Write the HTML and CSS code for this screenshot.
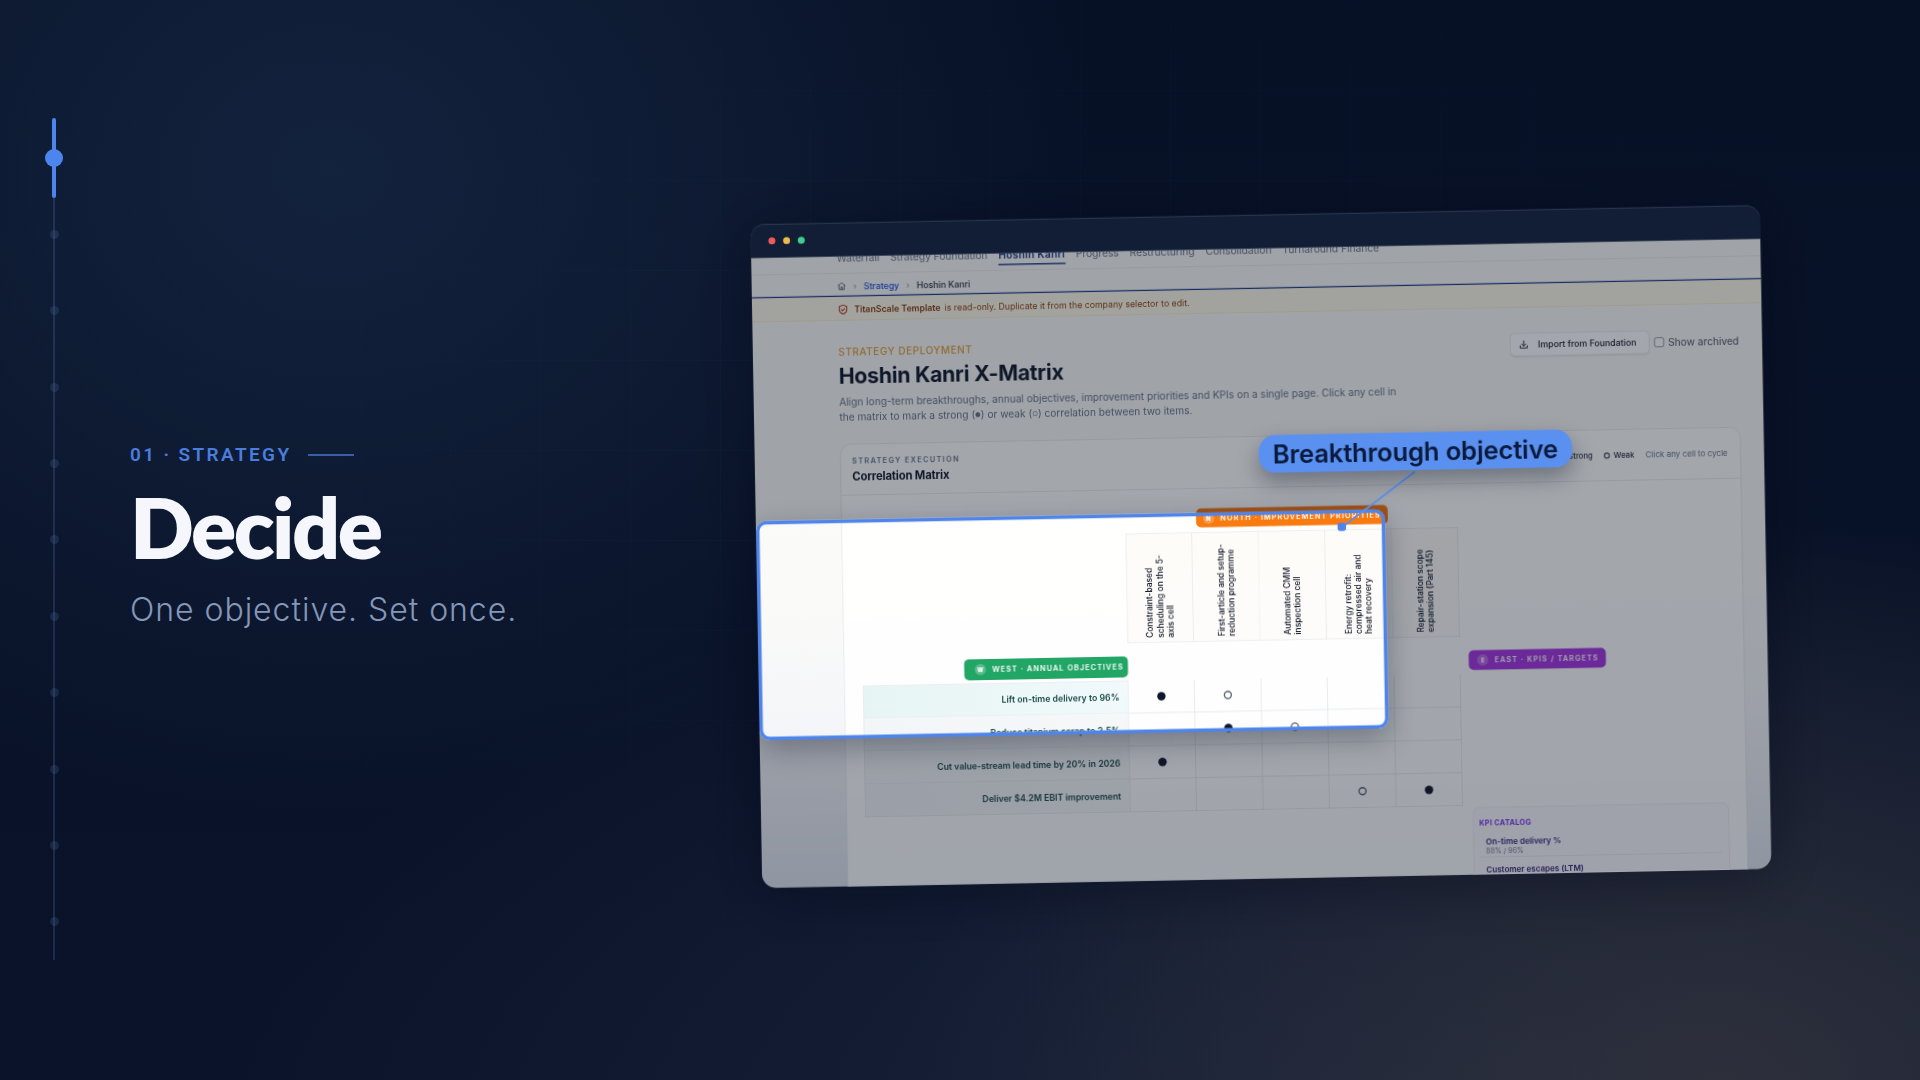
FILE: index.html
```html
<!DOCTYPE html>
<html lang="en">
<head>
<meta charset="utf-8">
<title>Decide</title>
<link rel="stylesheet" href="styles.css">
</head>
<body>
<div class="grid-bg"></div>
<main class="hero">
  <nav class="rail">
    <div class="rail-item active"><span class="rail-dot"></span></div>
    <div class="rail-item"><span class="rail-dot"></span></div>
    <div class="rail-item"><span class="rail-dot"></span></div>
    <div class="rail-item"><span class="rail-dot"></span></div>
    <div class="rail-item"><span class="rail-dot"></span></div>
    <div class="rail-item"><span class="rail-dot"></span></div>
    <div class="rail-item"><span class="rail-dot"></span></div>
    <div class="rail-item"><span class="rail-dot"></span></div>
    <div class="rail-item"><span class="rail-dot"></span></div>
    <div class="rail-item"><span class="rail-dot"></span></div>
    <div class="rail-item"><span class="rail-dot"></span></div>
  </nav>
  <section class="copy">
    <div class="eyebrow"><span>01 · STRATEGY</span><i class="eyebrow-line"></i></div>
    <h1 class="title">Decide</h1>
    <p class="sub">One objective. Set once.</p>
  </section>
</main>

<div class="window">
  <header class="titlebar">
    <span class="light red"></span><span class="light yellow"></span><span class="light green"></span>
  </header>
  <div class="viewport">
    <div class="tabs">
      <span class="tab">Waterfall</span>
      <span class="tab">Strategy Foundation</span>
      <span class="tab current">Hoshin Kanri</span>
      <span class="tab">Progress</span>
      <span class="tab">Restructuring</span>
      <span class="tab">Consolidation</span>
      <span class="tab">Turnaround Finance</span>
    </div>
    <div class="crumbs">
      <svg class="crumb-home" viewBox="0 0 24 24" fill="none" stroke="currentColor" stroke-width="2" stroke-linecap="round" stroke-linejoin="round"><path d="M3 10.500 12 3l9 7.500"/><path d="M5 9v12h14V9"/><path d="M10 21v-7h4v7"/></svg>
      <span class="crumb-sep">›</span>
      <span class="crumb-link">Strategy</span>
      <span class="crumb-sep">›</span>
      <span class="crumb-now">Hoshin Kanri</span>
    </div>
    <div class="banner">
      <svg class="banner-icon" viewBox="0 0 24 24" fill="none" stroke="currentColor" stroke-width="2.200" stroke-linecap="round" stroke-linejoin="round"><path d="M12 2.500 20 5.500v6.500c0 5-3.400 8.200-8 9.500-4.600-1.300-8-4.500-8-9.500V5.500z"/><path d="m8.500 12 2.500 2.500 4.500-4.500"/></svg>
      <strong>TitanScale Template</strong>
      <span>is read-only. Duplicate it from the company selector to edit.</span>
    </div>
    <div class="page">
      <div class="page-head">
        <div class="page-intro">
          <div class="kicker">STRATEGY DEPLOYMENT</div>
          <h2 class="page-title">Hoshin Kanri X-Matrix</h2>
          <p class="page-desc">Align long-term breakthroughs, annual objectives, improvement priorities and KPIs on a single page. Click any cell in the matrix to mark a strong (<span class="glyph">●</span>) or weak (<span class="glyph">○</span>) correlation between two items.</p>
        </div>
        <div class="page-actions">
          <button class="btn">
            <svg viewBox="0 0 24 24" fill="none" stroke="currentColor" stroke-width="2" stroke-linecap="round" stroke-linejoin="round"><path d="M12 4v11"/><path d="m7.500 11 4.500 4.500 4.500-4.500"/><path d="M4 15v5h16v-5"/></svg>
            Import from Foundation
          </button>
          <label class="check"><i class="check-box"></i>Show archived</label>
        </div>
      </div>

      <section class="card">
        <div class="card-head">
          <div>
            <div class="card-label">STRATEGY EXECUTION</div>
            <div class="card-title">Correlation Matrix</div>
          </div>
          <div class="legend">
            <span class="legend-item"><i class="mark strong small"></i>Strong</span>
            <span class="legend-item"><i class="mark weak small"></i>Weak</span>
            <span class="legend-hint">Click any cell to cycle</span>
          </div>
        </div>
        <div class="matrix">
          <div class="chip chip-north"><b>N</b>NORTH · IMPROVEMENT PRIORITIES</div>

          <div class="corner"></div>
          <div class="col-head first"><span>Constraint-based<br>scheduling on the 5-<br>axis cell</span></div>
          <div class="col-head"><span>First-article and setup-<br>reduction programme</span></div>
          <div class="col-head"><span>Automated CMM<br>inspection cell</span></div>
          <div class="col-head"><span>Energy retrofit:<br>compressed air and<br>heat recovery</span></div>
          <div class="col-head"><span>Repair-station scope<br>expansion (Part 145)</span></div>

          <div class="chip chip-west"><b>W</b>WEST · ANNUAL OBJECTIVES</div>
          <div class="chip chip-east"><b>E</b>EAST · KPIS / TARGETS</div>

          <div class="row lead">
            <div class="row-label">Lift on-time delivery to 96%</div>
            <div class="cell"><i class="mark strong"></i></div>
            <div class="cell"><i class="mark weak"></i></div>
            <div class="cell"></div>
            <div class="cell"></div>
            <div class="cell"></div>
          </div>
          <div class="row">
            <div class="row-label">Reduce titanium scrap to 2.5%</div>
            <div class="cell"></div>
            <div class="cell"><i class="mark strong"></i></div>
            <div class="cell"><i class="mark weak"></i></div>
            <div class="cell"></div>
            <div class="cell"></div>
          </div>
          <div class="row">
            <div class="row-label">Cut value-stream lead time by 20% in 2026</div>
            <div class="cell"><i class="mark strong"></i></div>
            <div class="cell"></div>
            <div class="cell"></div>
            <div class="cell"></div>
            <div class="cell"></div>
          </div>
          <div class="row">
            <div class="row-label">Deliver $4.2M EBIT improvement</div>
            <div class="cell"></div>
            <div class="cell"></div>
            <div class="cell"></div>
            <div class="cell"><i class="mark weak"></i></div>
            <div class="cell"><i class="mark strong"></i></div>
          </div>

          <aside class="kpis">
            <div class="kpis-label">KPI CATALOG</div>
            <div class="kpi"><div class="kpi-name">On-time delivery %</div><div class="kpi-val">88% / 96%</div></div>
            <div class="kpi"><div class="kpi-name">Customer escapes (LTM)</div><div class="kpi-val">14 / 4</div></div>
          </aside>
        </div>
      </section>
    </div>
    <div class="spotlight"></div>
  </div>
  <svg class="connector" viewBox="0 0 130 90"><path class="connector-line" d="M116 4 10 82"/><rect class="connector-dot" x="4" y="75" width="12" height="12" rx="4"/></svg>
  <div class="callout">Breakthrough objective</div>
</div>
</body>
</html>
```
FILE: styles.css
```css
* { box-sizing: border-box; }
html, body { margin: 0; height: 100%; }
body {
  width: 1920px;
  height: 1080px;
  overflow: hidden;
  position: relative;
  font-family: "Inter", "Liberation Sans", sans-serif;
  background:
    radial-gradient(820px 560px at 1720px 1080px, rgba(58,56,60,.62), rgba(58,56,60,0) 100%),
    radial-gradient(1300px 620px at 1500px 1130px, rgba(38,48,74,.62), rgba(38,48,74,0) 100%),
    radial-gradient(760px 640px at 330px 170px, #13223d 0%, rgba(19,34,61,.55) 50%, rgba(19,34,61,0) 100%),
    linear-gradient(180deg, #071126 0%, #0a1329 100%);
}
.grid-bg {
  position: absolute;
  inset: 0;
  background-image:
    linear-gradient(rgba(140,170,255,.028) 1px, transparent 1px),
    linear-gradient(90deg, rgba(140,170,255,.028) 1px, transparent 1px);
  background-size: 90px 90px;
  -webkit-mask-image: radial-gradient(900px 560px at 1000px 420px, #000 30%, transparent 100%);
  mask-image: radial-gradient(900px 560px at 1000px 420px, #000 30%, transparent 100%);
}

/* hero */
.hero { position: relative; display: flex; align-items: center; height: 1080px; padding-left: 53px; }
.rail { position: relative; display: flex; flex-direction: column; width: 2px; height: 840px; background: rgba(92,122,180,.24); }
.rail-item { flex: 1; display: flex; align-items: center; justify-content: center; position: relative; }
.rail-dot { flex: none; width: 9px; height: 9px; border-radius: 50%; background: rgba(80,108,165,.24); }
.rail-item.active .rail-dot { width: 18px; height: 18px; background: #4c85ee; position: relative; }
.rail-item.active::before { content: ""; position: absolute; left: -1px; top: -2px; bottom: -2px; width: 4px; border-radius: 2px; background: #4c85ee; }
.copy { margin-left: 75px; margin-top: -8px; }
.eyebrow { display: flex; align-items: center; gap: 16px; font: 600 19px/24px "Roboto", sans-serif; letter-spacing: .125em; color: #4a7ddd; }
.eyebrow-line { width: 46px; height: 2px; background: #3a5da8; }
.title { margin: 14px 0 0; font: 800 84px/92px "Lato", sans-serif; letter-spacing: -.03em; color: #f5f7fc; }
.sub { margin: 17px 0 0; font: 300 32px/40px "Inter", sans-serif; letter-spacing: .03em; color: #8597b8; }

/* window */
.window {
  position: absolute; left: 0; top: 0;
  width: 1442px; height: 948px;
  transform-origin: 0 0;
  transform: matrix(.69972,-.01338,.01234,.6999,750.6,224.5);
  display: flex; flex-direction: column;
  border-radius: 20px;
  box-shadow: 0 0 0 1px rgba(255,255,255,.05), 0 10px 90px rgba(2,6,20,.4);
  filter: blur(.4px);
}
.titlebar {
  flex: none; height: 48px; display: flex; align-items: center; gap: 11px;
  padding: 0 0 0 25px;
  background: #111e36;
  border-radius: 20px 20px 0 0;
  position: relative; z-index: 2;
  box-shadow: inset 0 1px 0 rgba(140,165,210,.22);
}
.light { width: 10px; height: 10px; border-radius: 50%; }
.red { background: #ef5b5b; } .yellow { background: #ecbb4d; } .green { background: #3fcf8e; }

.viewport {
  flex: 1; min-height: 0; position: relative; overflow: hidden;
  border-radius: 0 0 20px 20px;
  color: #0f172a;
  background: linear-gradient(180deg, #fbfbf8 0%, #fafaf8 55%, #f5f6f9 74%, #e0e5ee 100%);
}

/* app chrome */
.tabs {
  height: 37px; margin-top: -12px; padding: 5px 0 0 122px;
  display: flex; gap: 15.500px;
  border-bottom: 1px solid #e4e6e8;
  font-size: 14.600px; color: #64748b;
}
.tab { height: 22px; line-height: 18px; font-weight: 400; white-space: nowrap; }
.tab.current { color: #1e3a8a; font-weight: 600; letter-spacing: .4px; border-bottom: 2px solid #1e3a8a; height: 24px; }
.crumbs {
  height: 33px; padding: 3px 0 0 122px;
  display: flex; align-items: center; gap: 10px;
  border-bottom: 2px solid #1e3a8a;
  font-size: 12.500px; font-weight: 500; color: #475569;
}
.crumb-home { width: 13px; height: 13px; }
.crumb-sep { color: #94a3b8; }
.crumb-link { color: #1d4ed8; }
.crumb-now { color: #1e293b; }
.banner {
  height: 34px; padding: 3px 0 0 122px;
  display: flex; align-items: center; gap: 6px;
  background: #fefbe8; border-bottom: 1px solid #f6edc4;
  font-size: 12.500px; color: #92400e;
}
.banner strong { font-weight: 600; color: #8a3a10; }
.banner-icon { width: 16px; height: 16px; color: #b4341c; margin-right: 2px; }

/* page */
.page { padding: 36px 33px 0 122px; }
.page-head { display: flex; justify-content: space-between; align-items: flex-start; }
.page-intro { width: 850px; }
.kicker { margin-top: 1px; font-size: 14.200px; line-height: 16px; font-weight: 500; letter-spacing: .06em; color: #e0a23a; }
.page-title { margin: 8px 0 0; font-size: 30.500px; line-height: 36px; font-weight: 700; letter-spacing: -.014em; color: #0f172a; }
.page-desc { margin: 8px 0 0; width: 820px; font-size: 14.500px; line-height: 22px; color: #64748b; }
.glyph { font-size: 9px; vertical-align: 1px; }
.page-actions { display: flex; align-items: center; gap: 7px; }
.btn {
  flex: none; display: flex; align-items: center; gap: 13px; height: 33px; width: 199px; padding: 0 0 0 11px;
  border: 1px solid #e6e8ec; border-radius: 7px; background: #fff;
  font: 500 12.500px "Inter", sans-serif; color: #111827;
  box-shadow: 0 1px 2px rgba(0,0,0,.06);
}
.btn svg { width: 15px; height: 15px; flex: none; }
.check { flex: none; display: flex; align-items: center; gap: 6px; font-size: 14.500px; color: #4b5563; white-space: nowrap; }
.check-box { width: 14px; height: 14px; border: 1.500px solid #6b7280; border-radius: 3px; background: #fff; }

/* card */
.card {
  margin-top: 26px; height: 700px;
  background: rgba(255,255,255,.86);
  border: 1px solid #e3e6ea; border-radius: 16px;
}
.card-head {
  height: 73px; display: flex; justify-content: space-between; align-items: center;
  padding: 0 18px 0 16px;
  border-bottom: 1px solid #e3e6ea;
}
.card-label { font-size: 10.500px; line-height: 14px; font-weight: 600; letter-spacing: .18em; color: #64748b; }
.card-title { margin-top: 5px; font-size: 16px; line-height: 20px; font-weight: 700; letter-spacing: -.01em; color: #0f172a; }
.legend { display: flex; align-items: center; gap: 16px; font-size: 11px; font-weight: 500; color: #1f2937; }
.legend-item { display: flex; align-items: center; gap: 5px; }
.legend-hint { color: #64748b; font-weight: 400; font-size: 11.500px; }

/* matrix */
.matrix {
  display: grid;
  grid-template-columns: 379px repeat(5, 95px) 380px;
  grid-template-rows: 27px 163px 54px repeat(4, 47px) auto;
  padding: 28px 0 0 26px;
}
.corner { grid-column: 1; grid-row: 2; }
.chip {
  display: flex; align-items: center; gap: 9px;
  border-radius: 7px; color: #fff;
  font-size: 10.500px; font-weight: 600; letter-spacing: .14em; white-space: nowrap;
}
.chip b { width: 16px; height: 16px; border-radius: 50%; background: rgba(255,255,255,.25); display: flex; align-items: center; justify-content: center; font-size: 8px; letter-spacing: 0; }
.chip-north { grid-column: 2 / 7; grid-row: 1; justify-self: center; width: 274px; padding-left: 10px; background: #f97a10; }
.chip-west { grid-column: 1; grid-row: 3; justify-self: end; align-self: center; height: 30px; width: 234px; padding-left: 15px; background: #22a665; margin-top: 13px; }
.chip-east { grid-column: 7; grid-row: 3; justify-self: start; align-self: center; height: 28px; width: 196px; margin: 13px 0 0 12px; padding-left: 12px; background: #a536e0; }
.col-head {
  grid-row: 2; margin-top: 7px;
  display: flex; align-items: flex-end; justify-content: center;
  padding-bottom: 6px;
  background: linear-gradient(180deg, #fefcf9, #fdfcfa);
  border: 1px solid #e5e6e8; border-left: 0;
  font-size: 12px; line-height: 14.500px; font-weight: 500; color: #111827;
}
.col-head.first { grid-column: 2; border-left: 1px solid #e5e6e8; }
.col-head span { writing-mode: vertical-rl; transform: rotate(180deg); white-space: nowrap; }
.row { grid-column: 1 / 7; display: grid; grid-template-columns: 379px repeat(5, 95px); }
.row-label {
  display: flex; align-items: center; justify-content: flex-end;
  padding-right: 12px;
  background: linear-gradient(90deg, #f3f6f8, #f5f7f9);
  border-left: 1px solid #dfe5e8; border-bottom: 1px solid #dfe5e8; border-right: 1px solid #dfe5e8;
  font-size: 12.500px; font-weight: 600; color: #1c4a4a;
}
.lead .row-label { background: linear-gradient(90deg, #e6f5f3, #f1f9fb); border-top: 1px solid #dfe5e8; }
.cell { display: flex; align-items: center; justify-content: center; border-right: 1px solid #dfe3e8; border-bottom: 1px solid #dfe3e8; }
.mark { display: block; width: 12.500px; height: 12.500px; border-radius: 50%; }
.mark.strong { background: #0f172a; }
.mark.weak { background: #fff; border: 2px solid #5b6675; }
.mark.small { width: 9px; height: 9px; }
.kpis {
  grid-column: 7; grid-row: 8; margin: 2px 0 0 14px; height: 200px;
  padding: 16px 10px 0 8px;
  background: rgba(245,243,255,.55);
  border: 1px solid #e9e7f3; border-radius: 10px;
}
.kpis-label { font-size: 10.500px; line-height: 14px; font-weight: 700; letter-spacing: .04em; color: #7c3aed; }
.kpi { padding: 10px 6px 1px 9px; border-bottom: 1px solid #e6e4ee; }
.kpi-name { font-size: 11.500px; line-height: 16px; font-weight: 600; color: #3b2a7a; }
.kpi-val { font-size: 10px; line-height: 13px; color: #7a8190; }

/* spotlight: a hole in the dim layer */
.spotlight {
  position: absolute; left: 0; top: 376px;
  width: 899px; height: 313px;
  border: 5px solid #4f85ea; border-radius: 14px;
  box-shadow: 0 0 0 3000px rgba(12,20,38,.38), 0 14px 40px rgba(8,18,40,.3);
}

/* callout */
.callout {
  position: absolute; left: 720px; top: 315px;
  width: 448px; height: 54px;
  display: flex; align-items: center; justify-content: center;
  border-radius: 24px; background: #5a90ef;
  font-size: 36.500px; font-weight: 600; letter-spacing: -.005em; color: #0a1a3c;
  box-shadow: 0 14px 30px rgba(8,18,40,.35);
  white-space: nowrap;
}
.connector { position: absolute; left: 827px; top: 367px; width: 130px; height: 90px; overflow: visible; }
.connector-line { stroke: #5a90ef; stroke-width: 2.500; fill: none; }
.connector-dot { fill: #4f85ea; }
```
